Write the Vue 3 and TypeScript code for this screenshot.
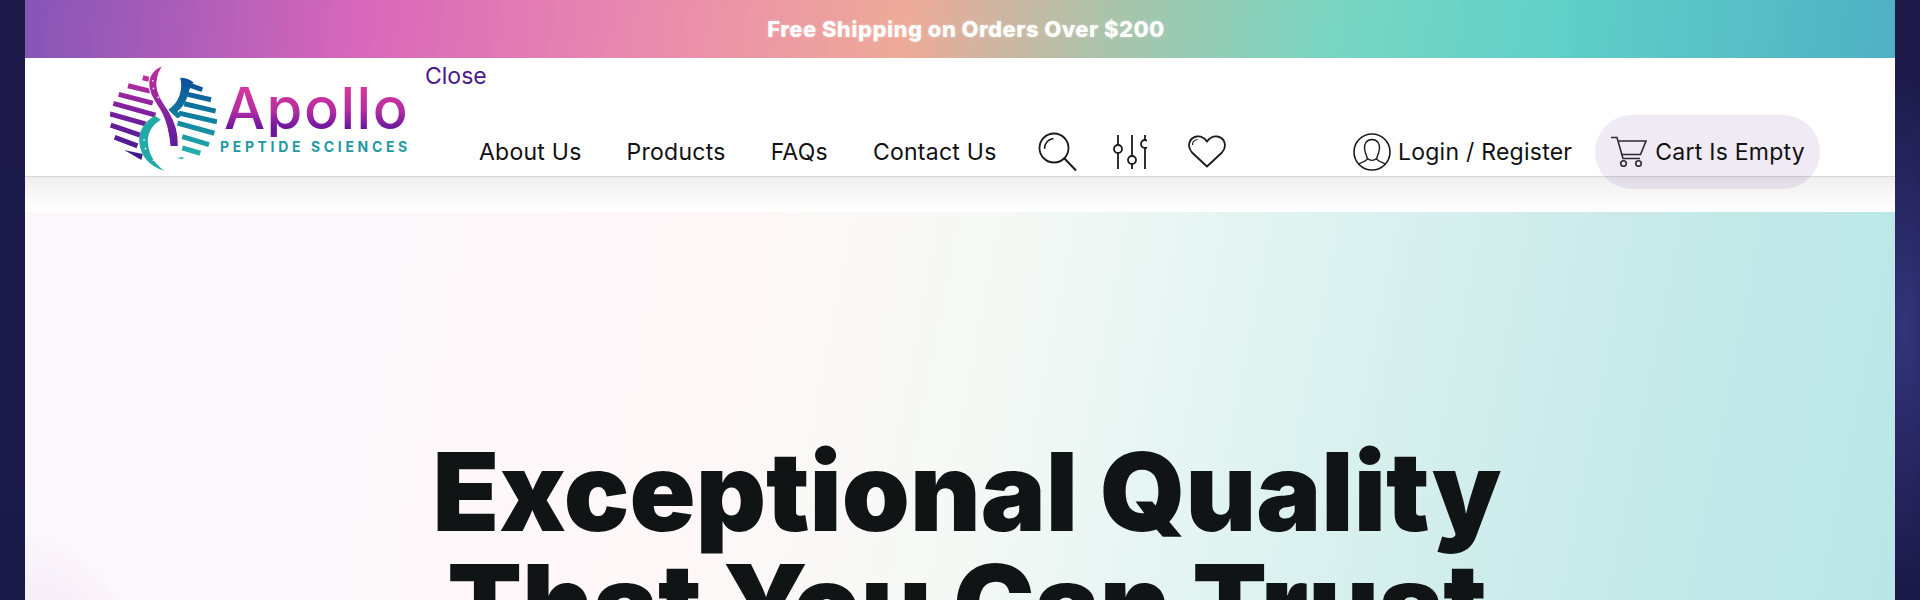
<script setup lang="ts">
const navLinks: string[] = ["About Us", "Products", "FAQs", "Contact Us"];
const dots: number[][] = [[158, 65], [160, 88], [174, 115], [132, 242], [136, 268], [160, 303]];
</script>

<template>
  <div class="page">
    <div class="shell">
      <div class="promo">Free Shipping on Orders Over $200</div>

      <header class="header">
        <a class="logo" href="#">
          <svg class="logo-mark" viewBox="30 15 320 320" aria-hidden="true">
            <defs>
              <linearGradient id="leftGrad" gradientUnits="userSpaceOnUse" x1="120" y1="50" x2="80" y2="300">
                <stop offset="0" stop-color="#c0309f" />
                <stop offset="0.45" stop-color="#7a1f9f" />
                <stop offset="1" stop-color="#3f1a8f" />
              </linearGradient>
              <linearGradient id="rightGrad" gradientUnits="userSpaceOnUse" x1="280" y1="60" x2="270" y2="300">
                <stop offset="0" stop-color="#0d4f9c" />
                <stop offset="0.5" stop-color="#10819f" />
                <stop offset="1" stop-color="#2bb6ae" />
              </linearGradient>
              <linearGradient id="strandGrad" gradientUnits="userSpaceOnUse" x1="180" y1="20" x2="220" y2="265">
                <stop offset="0" stop-color="#c0309f" />
                <stop offset="1" stop-color="#5a1a9c" />
              </linearGradient>
            </defs>
            <g fill="none" stroke="url(#leftGrad)" stroke-width="15">
              <path d="M128 56 L160 64" />
              <path d="M84 80 L150 96" />
              <path d="M56 106 L158 132" />
              <path d="M40 133 L166 168" />
              <path d="M30 164 L136 194" />
              <path d="M32 198 L120 228" />
              <path d="M44 234 L112 260" />
            </g>
            <path d="M72 272 L128 284 L124 302 Z" fill="#3f1a8f" />
            <g fill="none" stroke="url(#rightGrad)" stroke-width="15">
              <path d="M268 78 L306 92" />
              <path d="M262 106 L332 122" />
              <path d="M252 134 L346 156" />
              <path d="M236 162 L350 188" />
              <path d="M232 192 L342 222" />
              <path d="M246 232 L326 256" />
              <path d="M246 266 L300 282" />
            </g>
            <path d="M228 296 L250 293 L248 300 Z" fill="#2bb6ae" />
            <path d="M240 56 C256 56 270 62 280 70 C262 84 268 130 232 156 L244 170 L232 178 L204 152 C234 132 250 96 240 56 Z" fill="url(#rightGrad)" />
            <path d="M190 18 C164 28 148 46 146 70 C144 106 168 130 184 160 C200 190 206 224 210 262 L234 262 C236 224 226 188 206 156 C188 128 168 104 170 72 C172 50 178 32 190 18 Z" fill="url(#strandGrad)" stroke="#fff" stroke-width="3" />
            <path d="M164 170 L182 182 C152 200 140 228 144 256 C148 290 166 316 192 334 C150 322 122 292 118 252 C114 218 132 188 164 170 Z" fill="#23a8a8" />
            <circle v-for="d in dots" :key="d[0] + '-' + d[1]" :cx="d[0]" :cy="d[1]" r="2.5" fill="#fff" />
          </svg>
          <span class="logo-text">
            <span class="logo-name">Apollo</span>
            <span class="logo-sub">PEPTIDE SCIENCES</span>
          </span>
        </a>

        <a class="close-link" href="#">Close</a>

        <div class="nav-row">
          <nav class="nav">
            <a v-for="link in navLinks" :key="link" href="#">{{ link }}</a>
          </nav>

          <div class="tools">
            <svg class="tool search-icon" viewBox="0 0 40 40" aria-hidden="true">
              <circle cx="16" cy="16" r="14.5" />
              <path d="M26.5 26.5 L38 38.500" stroke-width="2" />
              <path d="M6.500 17 C6.500 11 10 7.500 15.500 6.500" stroke-width="1.400" />
            </svg>
            <svg class="tool sliders-icon" viewBox="0 0 34 36" aria-hidden="true">
              <path d="M5 1 V11 M5 19 V35 M19 1 V22 M19 30 V35 M32 1 V6 M32 14 V35" />
              <circle cx="5" cy="15" r="4" />
              <circle cx="19" cy="26" r="4" />
              <circle cx="32" cy="10" r="4" />
            </svg>
            <svg class="tool heart-icon" viewBox="0 0 38 33" aria-hidden="true">
              <path d="M19 31.500 L4 17.500 C-1 12 0.500 3 8.500 1.500 C13 0.800 16.500 3 19 6.500 C21.500 3 25 0.800 29.500 1.500 C37.500 3 39 12 34 17.500 Z" />
              <path d="M4.500 10 C4.500 7 6.500 5 9.500 4.500" stroke-width="1.200" />
            </svg>
          </div>

          <div class="account">
            <a class="login" href="#">
              <svg class="user-icon" viewBox="0 0 38 38" aria-hidden="true">
                <circle cx="19" cy="19" r="18" />
                <path d="M19 6.500 C13.500 6.500 11 11 11.500 15.500 C12 20 14 24 14.500 25.500 C13 28.500 8.500 29.500 5.500 31 M19 6.500 C24.500 6.500 27 11 26.500 15.500 C26 20 24 24 23.500 25.500 C25 28.500 29.500 29.500 32.500 31 M14.500 25.500 C17 28 21 28 23.500 25.500" stroke-width="1.400" />
              </svg>
              <span>Login / Register</span>
            </a>
            <a class="cart" href="#">
              <svg class="cart-icon" viewBox="0 0 37 31" aria-hidden="true">
                <path d="M1 1.500 H7 L13 22.500 H30" />
                <path d="M8.500 5 H36 L30.500 18.500 H12" />
                <circle cx="13.500" cy="27.500" r="2.800" />
                <circle cx="28.500" cy="27.500" r="2.800" />
              </svg>
              <span>Cart Is Empty</span>
            </a>
          </div>
        </div>
      </header>

      <div class="header-fade"></div>

      <main class="hero">
        <h1>Exceptional Quality<br />That You Can Trust</h1>
      </main>
    </div>
  </div>
</template>

<style>
html,
body {
  margin: 0;
  background: #1b1a45;
}
</style>

<style scoped>
.page {
  height: 600px;
  overflow: hidden;
  padding: 0 25px;
  font-family: Inter, "Liberation Sans", sans-serif;
  background:
    radial-gradient(ellipse 60px 260px at 1905px 330px, #34347c 0%, rgba(52, 52, 124, 0) 100%),
    linear-gradient(180deg, #1d1a4a 0%, #1a1a48 100%);
}

a {
  color: inherit;
  text-decoration: none;
}

.shell {
  height: 600px;
  display: flex;
  flex-direction: column;
}

.promo {
  height: 58px;
  flex: none;
  display: flex;
  align-items: center;
  justify-content: center;
  padding-left: 12px;
  color: #fff;
  font-size: 22px;
  font-weight: 800;
  letter-spacing: 0.45px;
  text-shadow: 0 0 3px rgba(255, 255, 255, 0.35);
  background: linear-gradient(97deg, #8555b6 0%, #d867ba 18%, #e98aae 33%, #eeaa98 47%, #a9c4ab 58%, #78d6c2 70%, #60d0c8 82%, #4fb0c3 100%);
}

.header {
  position: relative;
  z-index: 1;
  height: 119px;
  flex: none;
  display: flex;
  align-items: stretch;
  box-sizing: border-box;
  padding: 0 75px 0 85px;
  background: #fff;
  border-bottom: 1px solid #d6d6d8;
}

.logo {
  flex: none;
  display: flex;
  align-items: center;
  width: 369px;
}

.logo-mark {
  width: 107px;
  height: 107px;
  flex: none;
}

.logo-text {
  display: flex;
  flex-direction: column;
  margin-left: 3px;
}

.logo-name {
  padding-left: 4px;
  font-size: 58px;
  line-height: 58px;
  font-weight: 500;
  letter-spacing: 1.500px;
  color: transparent;
  background: linear-gradient(180deg, #d2369f 20%, #b22da2 55%, #6a169e 85%);
  -webkit-background-clip: text;
  background-clip: text;
}

.logo-sub {
  margin-top: 2px;
  font-size: 14px;
  line-height: 16px;
  font-weight: 700;
  letter-spacing: 3.650px;
  white-space: nowrap;
  color: #1f9aa4;
}

.close-link {
  position: absolute;
  left: 400px;
  top: 3px;
  font-size: 23px;
  line-height: 30px;
  color: #4a1a8c;
}

.nav-row {
  flex: 1;
  display: flex;
  align-items: center;
  padding-top: 69px;
  font-size: 23px;
  letter-spacing: 0.25px;
  color: #111;
}

.nav {
  display: flex;
  gap: 45px;
  white-space: nowrap;
}

.tools {
  display: flex;
  align-items: center;
  margin-left: 41px;
}

.tool {
  flex: none;
  fill: none;
  stroke: #1a1a1a;
  stroke-width: 1.800;
}

.search-icon {
  width: 40px;
  height: 40px;
}

.sliders-icon {
  width: 34px;
  height: 36px;
  margin-left: 35px;
}

.heart-icon {
  width: 38px;
  height: 33px;
  margin-left: 41px;
}

.account {
  margin-left: auto;
  display: flex;
  align-items: center;
  gap: 23px;
  white-space: nowrap;
}

.login {
  display: flex;
  align-items: center;
  gap: 7px;
}

.user-icon {
  width: 38px;
  height: 38px;
  flex: none;
  fill: none;
  stroke: #1a1a1a;
  stroke-width: 1.600;
}

.cart {
  display: flex;
  align-items: center;
  gap: 8px;
  height: 74px;
  padding: 0 15px 0 15px;
  box-sizing: border-box;
  border-radius: 37px;
  background: rgba(98, 50, 150, 0.1);
}

.cart-icon {
  width: 37px;
  height: 31px;
  flex: none;
  fill: none;
  stroke: #2a2a35;
  stroke-width: 1.600;
}

.header-fade {
  height: 35px;
  flex: none;
  background: linear-gradient(180deg, #efefef 0%, #f6f6f6 40%, #ffffff 95%);
}

.hero {
  flex: 1;
  min-height: 0;
  overflow: hidden;
  background:
    radial-gradient(ellipse 150px 280px at 0 600px, rgba(224, 204, 240, 0.9) 0%, rgba(224, 204, 240, 0) 100%),
    linear-gradient(101deg, #fbf7fb 0%, #fdf7f8 38%, #f6f9f6 50%, #dff3f0 66%, #c2e8e8 88%, #bbe6e7 100%);
}

.hero h1 {
  margin: 0;
  padding: 223px 0 0 14px;
  text-align: center;
  font-size: 109px;
  line-height: 112px;
  font-weight: 900;
  letter-spacing: 0;
  color: #101415;
}
</style>
